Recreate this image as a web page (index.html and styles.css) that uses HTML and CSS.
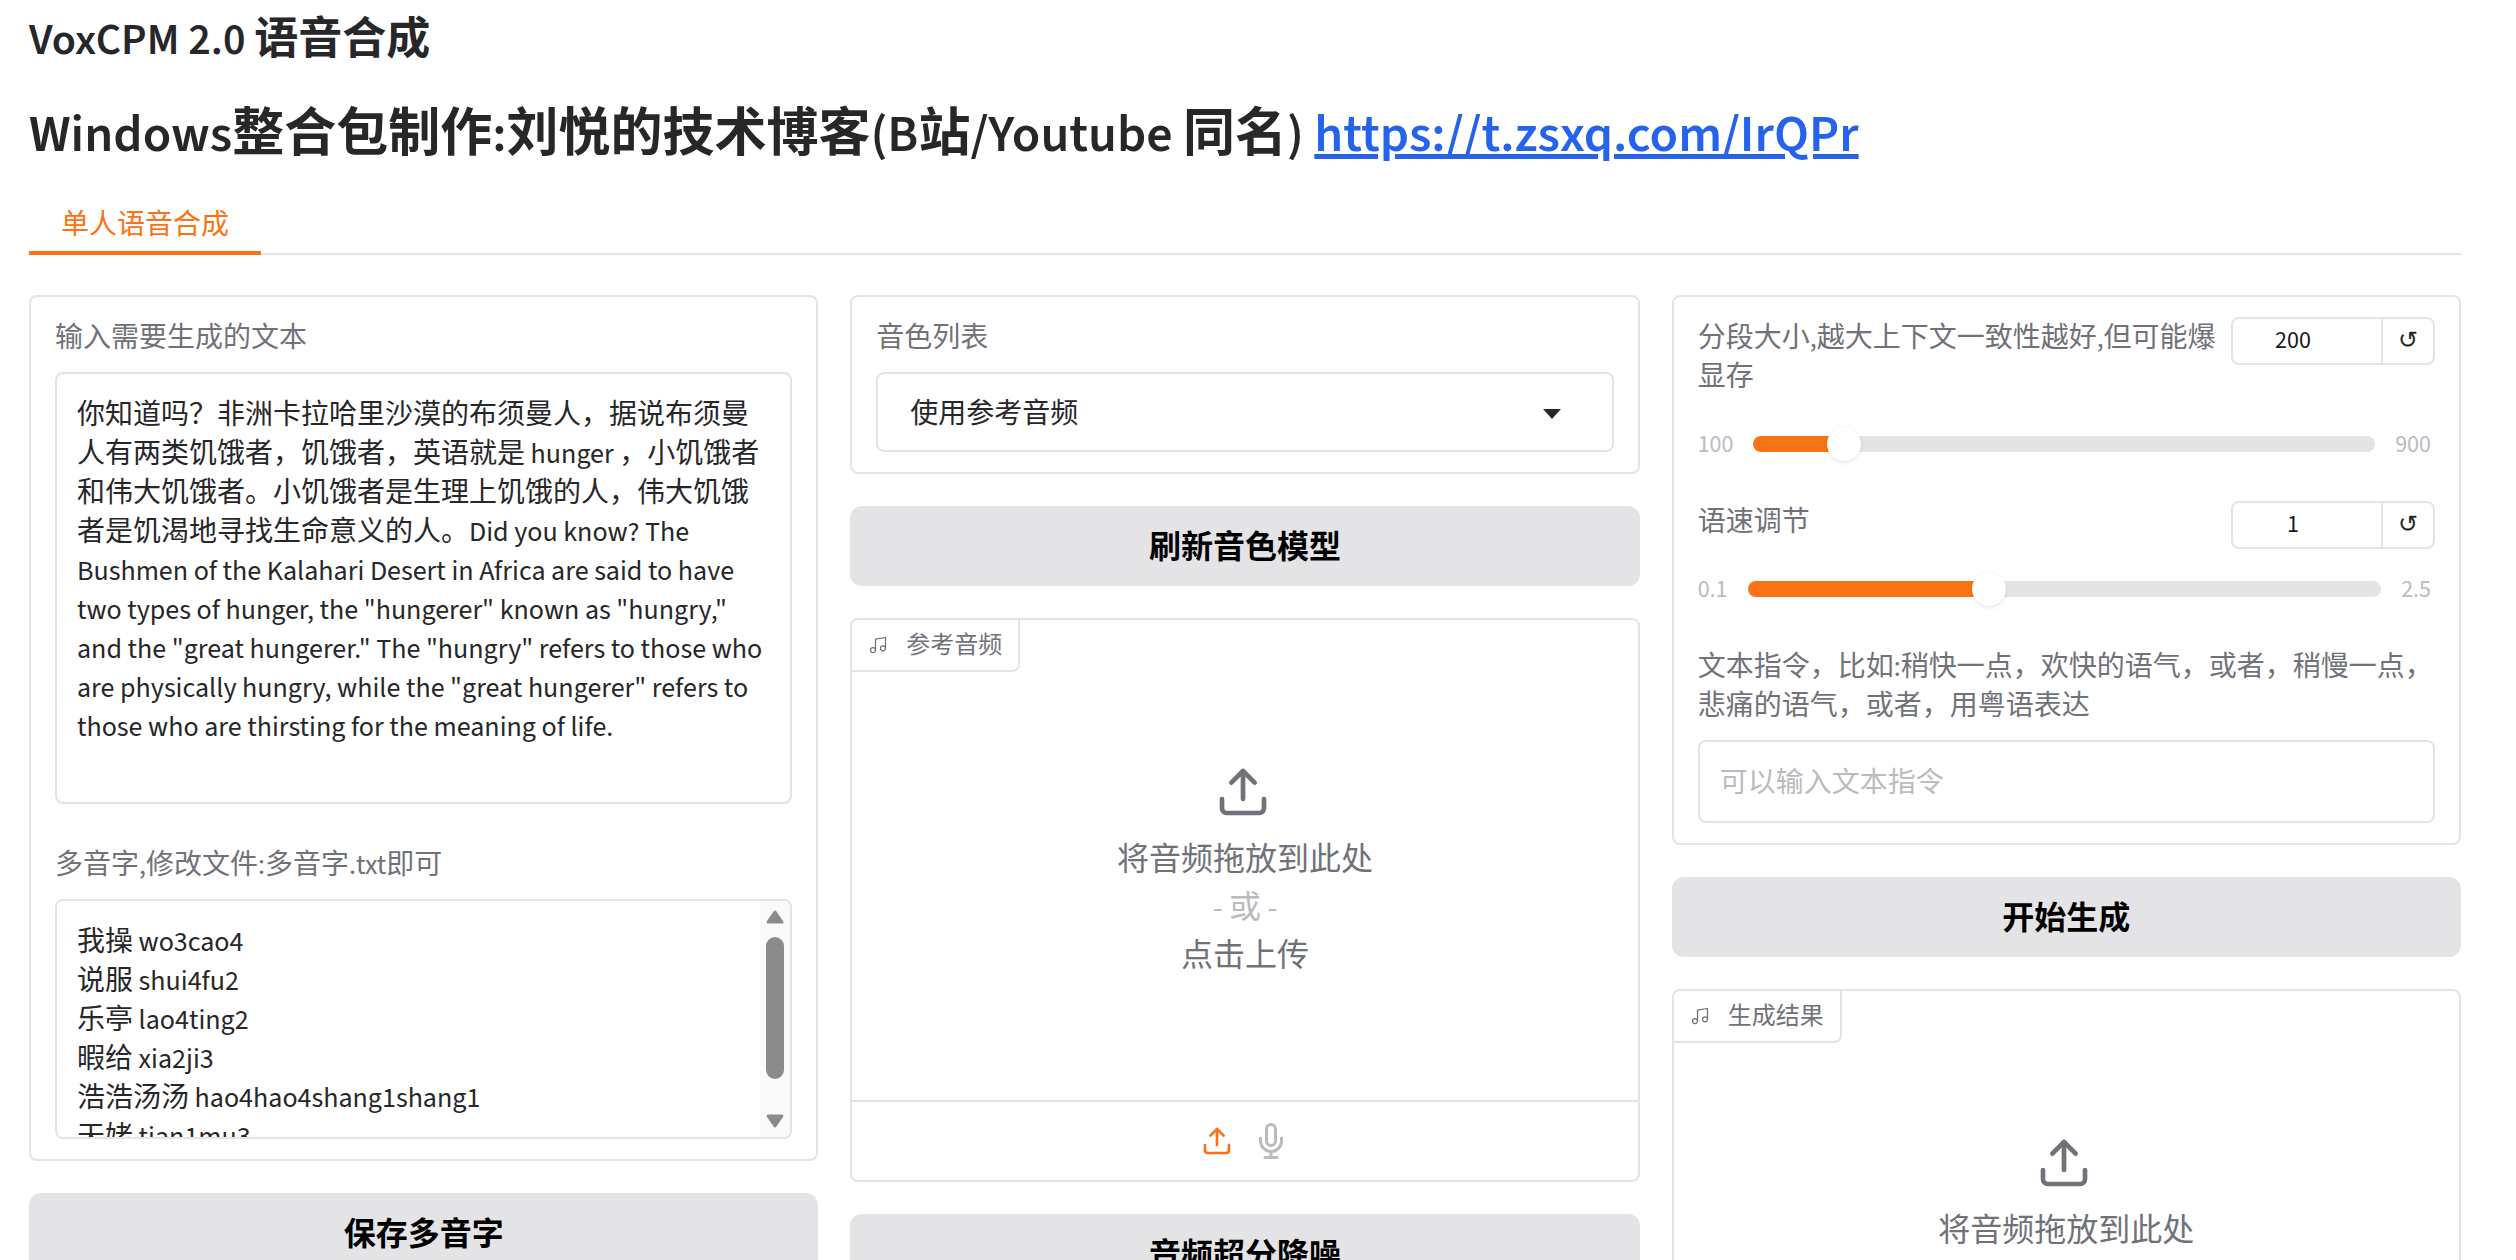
FILE: index.html
```
<!DOCTYPE html>
<html lang="zh-CN">
<head>
  <meta charset="UTF-8">
  <meta name="viewport" content="width=device-width, initial-scale=1.0">
  <title>VoxCPM 2.0 语音合成</title>
  <link rel="stylesheet" href="styles.css">
</head>
<body>
  <svg class="sprite" aria-hidden="true">
    <symbol id="icon-upload" viewBox="0 0 24 24">
      <path d="M21 15v4a2 2 0 0 1-2 2H5a2 2 0 0 1-2-2v-4"/>
      <polyline points="17 8 12 3 7 8"/>
      <line x1="12" y1="3" x2="12" y2="15"/>
    </symbol>
    <symbol id="icon-music" viewBox="0 0 24 24">
      <path d="M9 18V5l12-2v13"/>
      <circle cx="6" cy="18" r="3"/>
      <circle cx="18" cy="16" r="3"/>
    </symbol>
    <symbol id="icon-mic" viewBox="0 0 24 24">
      <path d="M12 1a3 3 0 0 0-3 3v8a3 3 0 0 0 6 0V4a3 3 0 0 0-3-3z"/>
      <path d="M19 10v2a7 7 0 0 1-14 0v-2"/>
      <line x1="12" y1="19" x2="12" y2="23"/>
      <line x1="8" y1="23" x2="16" y2="23"/>
    </symbol>
  </svg>

  <main class="container">
    <h2>VoxCPM 2.0 语音合成</h2>
    <h1>Windows整合包制作:刘悦的技术博客(B站/Youtube 同名) <a href="https://t.zsxq.com/IrQPr">https://t.zsxq.com/IrQPr</a></h1>

    <div class="tabs" role="tablist">
      <button type="button" class="tab" role="tab" aria-selected="true">单人语音合成</button>
    </div>

    <div class="row">
      <div class="column">
        <div class="form">
          <div class="block">
            <label for="text">输入需要生成的文本</label>
            <textarea id="text" class="text-input">你知道吗？非洲卡拉哈里沙漠的布须曼人，据说布须曼人有两类饥饿者，饥饿者，英语就是 hunger ，小饥饿者和伟大饥饿者。小饥饿者是生理上饥饿的人，伟大饥饿者是饥渴地寻找生命意义的人。Did you know? The Bushmen of the Kalahari Desert in Africa are said to have two types of hunger, the "hungerer" known as "hungry," and the "great hungerer." The "hungry" refers to those who are physically hungry, while the "great hungerer" refers to those who are thirsting for the meaning of life.</textarea>
          </div>
          <div class="block">
            <label for="polyphone">多音字,修改文件:多音字.txt即可</label>
            <div class="scroll-box">
              <textarea id="polyphone" class="text-input text-input-short">我操 wo3cao4
说服 shui4fu2
乐亭 lao4ting2
暇给 xia2ji3
浩浩汤汤 hao4hao4shang1shang1
天姥 tian1mu3
</textarea>
              <div class="scrollbar" aria-hidden="true">
                <svg viewBox="0 0 18 14"><path d="M9 2 L16 12 H2 Z"/></svg>
                <span class="scrollbar-thumb"></span>
                <svg viewBox="0 0 18 14"><path d="M2 2 H16 L9 12 Z"/></svg>
              </div>
            </div>
          </div>
        </div>
        <button type="button" class="btn">保存多音字</button>
      </div>

      <div class="column">
        <div class="form">
          <div class="block">
            <label for="voice">音色列表</label>
            <div class="select-box">
              <select id="voice">
                <option>使用参考音频</option>
              </select>
              <svg class="caret" viewBox="0 0 18 10" aria-hidden="true"><path d="M0 0h18l-9 10z"/></svg>
            </div>
          </div>
        </div>
        <button type="button" class="btn">刷新音色模型</button>
        <div class="audio">
          <div class="audio-label">
            <svg class="icon-note"><use href="#icon-music"/></svg>
            <span>参考音频</span>
          </div>
          <button type="button" class="dropzone">
            <svg class="icon-drop"><use href="#icon-upload"/></svg>
            <span>将音频拖放到此处</span>
            <span class="or">- 或 -</span>
            <span>点击上传</span>
          </button>
          <div class="sources">
            <button type="button" class="source active" aria-label="上传文件"><svg class="icon-source"><use href="#icon-upload"/></svg></button>
            <button type="button" class="source" aria-label="麦克风"><svg class="icon-mic"><use href="#icon-mic"/></svg></button>
          </div>
        </div>
        <button type="button" class="btn">音频超分降噪</button>
      </div>

      <div class="column">
        <div class="form">
          <div class="block">
            <div class="slider-head">
              <label for="segment">分段大小,越大上下文一致性越好,但可能爆显存</label>
              <div class="number-box">
                <input type="text" inputmode="numeric" value="200" aria-label="分段大小">
                <button type="button" aria-label="重置分段大小">↺</button>
              </div>
            </div>
            <div class="slider">
              <span>100</span>
              <input type="range" id="segment" min="100" max="900" value="200" style="--fill: 12.5%">
              <span>900</span>
            </div>
          </div>
          <div class="block">
            <div class="slider-head">
              <label for="speed">语速调节</label>
              <div class="number-box">
                <input type="text" inputmode="decimal" value="1" aria-label="语速">
                <button type="button" aria-label="重置语速">↺</button>
              </div>
            </div>
            <div class="slider">
              <span>0.1</span>
              <input type="range" id="speed" min="0.1" max="2.5" step="0.1" value="1" style="--fill: 37.5%">
              <span>2.5</span>
            </div>
          </div>
          <div class="block">
            <label for="instruct">文本指令，比如:稍快一点，欢快的语气，或者，稍慢一点，悲痛的语气，或者，用粤语表达</label>
            <input type="text" id="instruct" class="text-input" placeholder="可以输入文本指令">
          </div>
        </div>
        <button type="button" class="btn">开始生成</button>
        <div class="audio">
          <div class="audio-label">
            <svg class="icon-note"><use href="#icon-music"/></svg>
            <span>生成结果</span>
          </div>
          <button type="button" class="dropzone">
            <svg class="icon-drop"><use href="#icon-upload"/></svg>
            <span>将音频拖放到此处</span>
            <span class="or">- 或 -</span>
            <span>点击上传</span>
          </button>
        </div>
      </div>
    </div>
  </main>
</body>
</html>
```
FILE: styles.css
```
:root {
  --border: #e4e4e7;
  --text: #27272a;
  --muted: #71717a;
  --light: #bbbbbf;
  --orange: #f97316;
}

* {
  box-sizing: border-box;
}

body {
  margin: 0;
  height: 100vh;
  overflow: hidden;
  background: #fff;
  color: var(--text);
  font-family: "Source Sans 3", "Source Sans Pro", "Noto Sans CJK SC", sans-serif;
  font-size: 28px;
  line-height: 39px;
}

button,
input,
select,
textarea {
  font: inherit;
  color: inherit;
}

button {
  border: none;
  background: none;
  padding: 0;
  cursor: pointer;
}

svg {
  display: block;
  overflow: visible;
  fill: none;
  stroke: currentColor;
  stroke-width: 2px;
  stroke-linecap: round;
  stroke-linejoin: round;
}

.sprite {
  display: none;
}

.container {
  padding: 10px 55px 0 29px;
}

h1,
h2 {
  margin: 0;
  font-weight: 600;
}

h2 {
  font-size: 44px;
  line-height: 62px;
}

h1 {
  margin-top: 26px;
  font-size: 52px;
  line-height: 74px;
}

h1 a {
  color: #2563eb;
}

.tabs {
  display: flex;
  margin: 20px 0 40px;
  box-shadow: inset 0 -2px 0 var(--border);
}

.tab {
  height: 63px;
  padding: 8px 32px 0;
  border-bottom: 4px solid var(--orange);
  color: var(--orange);
}

.row {
  display: grid;
  grid-template-columns: repeat(3, minmax(0, 1fr));
  align-items: start;
  gap: 32px;
}

.column {
  display: flex;
  flex-direction: column;
  gap: 32px;
}

.form {
  border: 2px solid var(--border);
  border-radius: 8px;
}

.block {
  padding: 20px 24px;
}

label {
  display: block;
  padding-top: 2px;
  margin-bottom: 14px;
  color: var(--muted);
}

.text-input {
  display: block;
  width: 100%;
  padding: 22px 20px 18px;
  border: 2px solid var(--border);
  border-radius: 8px;
  background: #fff;
  outline: none;
  resize: none;
}

textarea.text-input {
  height: 432px;
}

textarea.text-input-short {
  height: 240px;
}

.text-input::placeholder {
  color: var(--light);
}

.scroll-box {
  position: relative;
}

.scrollbar {
  position: absolute;
  top: 2px;
  right: 2px;
  bottom: 2px;
  width: 30px;
  padding: 9px 6px;
  display: flex;
  flex-direction: column;
  background: #fafafa;
  border-radius: 0 6px 6px 0;
  pointer-events: none;
}

.scrollbar svg {
  height: 14px;
  fill: #8b8b8b;
  stroke: #8b8b8b;
  stroke-width: 3px;
}

.scrollbar-thumb {
  height: 142px;
  margin: 13px 0 auto;
  border-radius: 9px;
  background: #8b8b8b;
}

.select-box {
  position: relative;
}

.select-box select {
  display: block;
  width: 100%;
  height: 80px;
  padding: 4px 32px 0;
  border: 2px solid var(--border);
  border-radius: 8px;
  background: #fff;
  appearance: none;
}

.caret {
  position: absolute;
  top: 37px;
  right: 53px;
  width: 18px;
  height: 10px;
  fill: var(--text);
  stroke: none;
  pointer-events: none;
}

.btn {
  height: 80px;
  padding-top: 4px;
  border-radius: 12px;
  background: var(--border);
  color: #000;
  font-size: 32px;
  font-weight: 600;
}

.audio {
  position: relative;
  border: 2px solid var(--border);
  border-radius: 8px;
}

.audio-label {
  position: absolute;
  top: 0;
  left: 0;
  display: flex;
  align-items: center;
  gap: 18px;
  height: 52px;
  padding: 0 16px;
  border: solid var(--border);
  border-width: 0 2px 2px 0;
  border-radius: 0 0 8px 0;
  color: var(--muted);
  font-size: 24px;
}

.icon-note {
  width: 20px;
  height: 20px;
  stroke-width: 1.5px;
}

.dropzone {
  display: flex;
  flex-direction: column;
  align-items: center;
  width: 100%;
  height: 480px;
  padding-top: 144px;
  color: var(--muted);
  font-size: 32px;
  line-height: 48px;
}

.icon-drop {
  width: 56px;
  height: 56px;
  margin: 0 4px 16px 0;
}

.or {
  color: var(--light);
}

.sources {
  display: flex;
  justify-content: center;
  align-items: center;
  gap: 20px;
  height: 80px;
  border-top: 2px solid var(--border);
}

.source {
  color: var(--light);
}

.source.active {
  color: var(--orange);
}

.icon-source {
  width: 32px;
  height: 32px;
}

.icon-mic {
  width: 36px;
  height: 36px;
}

.slider-head {
  display: flex;
  justify-content: space-between;
  align-items: flex-start;
  gap: 12px;
}

.number-box {
  display: flex;
  flex: none;
  height: 48px;
  border: 2px solid var(--border);
  border-radius: 8px;
  font-size: 24px;
  line-height: 34px;
}

.number-box input {
  width: 148px;
  padding: 0 28px 0 0;
  border: none;
  background: none;
  color: #18181b;
  text-align: center;
  outline: none;
}

.number-box button {
  width: 52px;
  border-left: 2px solid var(--border);
}

.slider {
  display: flex;
  align-items: center;
  gap: 20px;
  height: 34px;
  margin-top: 16px;
  padding-right: 4px;
  color: var(--light);
  font-size: 24px;
}

.slider input {
  flex: 1;
  min-width: 0;
  height: 16px;
  margin: 0;
  border-radius: 8px;
  background: linear-gradient(to right, var(--orange) var(--fill), var(--border) var(--fill));
  appearance: none;
}

.slider input::-webkit-slider-thumb {
  width: 34px;
  height: 34px;
  border-radius: 50%;
  background: #fff;
  box-shadow: 0 0 2px rgba(0, 0, 0, 0.06), 0 2px 4px rgba(0, 0, 0, 0.08);
  appearance: none;
}
```
